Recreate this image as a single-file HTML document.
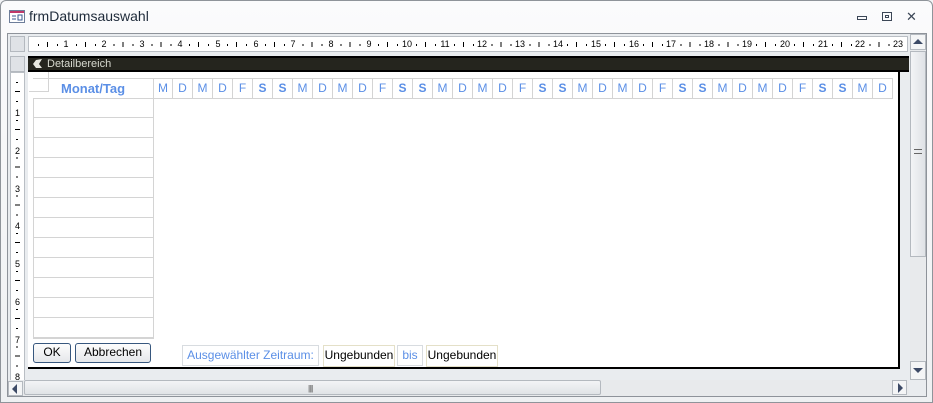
<!DOCTYPE html>
<html><head><meta charset="utf-8"><style>
*{margin:0;padding:0;box-sizing:border-box}
body{width:933px;height:403px;overflow:hidden;background:#f3f4f6;font-family:"Liberation Sans",sans-serif;position:relative}
.a{position:absolute}
.win{left:0;top:0;width:933px;height:403px;border:1px solid #8f949a;border-radius:6px 6px 0 0;background:linear-gradient(#fbfbfc,#eef0f2)}
.title{left:29px;top:8px;font-size:14px;color:#1e2a3a}
.frame{left:7px;top:33px;width:920px;height:364px;border:1px solid #8e939a;background:#e9ecef}
.hr{left:28px;top:36px;width:880px;height:16px;background:#fff;border:1px solid #b9bec4;font-size:9px;color:#000}
.hr span{position:absolute;top:1px;width:14px;margin-left:-7px;text-align:center;background:#fff;line-height:12px}
.vr{left:10px;top:56px;width:15px;height:325px;background:#fff;border:1px solid #b9bec4;font-size:9px}
.vr span{position:absolute;left:0;width:13px;text-align:center;margin-top:-6px;background:#fff;line-height:12px}
.box{background:#dfe2e6;border:1px solid #b4b9bf}
.sec{left:28px;top:56px;width:881px;height:16px;background:#25251e;border-top:2px solid #000;border-bottom:2px solid #000;color:#d8dad0;font-size:11px;padding-left:19px;line-height:12px}
.detail{left:28px;top:72px;width:872px;height:297px;background:#fff;border-right:2px solid #000;border-bottom:2px solid #000}
.cell{position:absolute;border:1px solid #d4d4d4;color:#5b8fe6;font-size:12px;text-align:center;line-height:18px}
.btn{position:absolute;border:1px solid #37577e;border-radius:3px;background:linear-gradient(#fdfdfd,#e5e7ea);font-size:12px;text-align:center;line-height:17px;color:#000}
.fld{position:absolute;font-size:12px;line-height:19px;text-align:center}
</style></head><body>
<div class="a win"></div>
<svg class="a" style="left:9px;top:10px" width="16" height="13"><rect x="0.5" y="0.5" width="15" height="12" fill="#fff" stroke="#6d7d99"/><rect x="1" y="1" width="14" height="2" fill="#c0386a"/><path d="M3 6h4M3 9h4" stroke="#3b5a92"/><rect x="9" y="5" width="4" height="5" fill="none" stroke="#3b5a92"/></svg>
<div class="a title">frmDatumsauswahl</div>
<div class="a" style="left:857px;top:16px;width:10px;height:4px;border:1px solid #3b4656"></div>
<div class="a" style="left:882px;top:12px;width:10px;height:9px;border:1px solid #3b4656"><div style="margin:2px;height:3px;border:1px solid #3b4656"></div></div>
<div class="a" style="left:906px;top:9px;font-size:13px;color:#3b4656">✕</div>
<div class="a frame"></div>
<div class="a box" style="left:10px;top:36px;width:15px;height:16px"></div>
<div class="a box" style="left:10px;top:56px;width:15px;height:16px;"></div>
<div class="a hr" style="background:#fff repeating-linear-gradient(90deg,transparent 0 9px,#000 9px 10px,transparent 10px 37.8px) 0 7px/100% 2px no-repeat">
<div class="a" style="left:0;top:5px;width:100%;height:5px;background:repeating-linear-gradient(90deg,transparent 0 18px,#000 18px 19px,transparent 19px 37.8px)"></div>
<div class="a" style="left:0;top:7px;width:100%;height:2px;background:repeating-linear-gradient(90deg,transparent 0 28px,#000 28px 29px,transparent 29px 37.8px)"></div>
<span style="left:37px">1</span><span style="left:75px">2</span><span style="left:113px">3</span><span style="left:151px">4</span><span style="left:189px">5</span><span style="left:227px">6</span><span style="left:264px">7</span><span style="left:302px">8</span><span style="left:340px">9</span><span style="left:378px">10</span><span style="left:416px">11</span><span style="left:453px">12</span><span style="left:491px">13</span><span style="left:529px">14</span><span style="left:567px">15</span><span style="left:605px">16</span><span style="left:642px">17</span><span style="left:680px">18</span><span style="left:718px">19</span><span style="left:756px">20</span><span style="left:794px">21</span><span style="left:831px">22</span><span style="left:869px">23</span>
</div>
<div class="a vr" style="top:72px;height:309px;background:#fff">
<div class="a" style="left:5px;top:0;width:2px;height:100%;background:repeating-linear-gradient(180deg,transparent 0 9px,#000 9px 10px,transparent 10px 18px,transparent 18px 37.8px)"></div>
<div class="a" style="left:4px;top:0;width:5px;height:100%;background:repeating-linear-gradient(180deg,transparent 0 18px,#000 18px 19px,transparent 19px 37.8px)"></div>
<div class="a" style="left:5px;top:0;width:2px;height:100%;background:repeating-linear-gradient(180deg,transparent 0 28px,#000 28px 29px,transparent 29px 37.8px)"></div>
<span style="top:40px">1</span><span style="top:78px">2</span><span style="top:116px">3</span><span style="top:153px">4</span><span style="top:191px">5</span><span style="top:229px">6</span><span style="top:267px">7</span><span style="top:304px">8</span>
</div>
<div class="a sec">Detailbereich</div>
<svg class="a" style="left:33px;top:59px" width="10" height="10"><path d="M9 0L3 1 0 5 3 9 9 9 6 5Z" fill="#e8e8e0"/></svg>
<div class="a detail"></div>
<div class="a" style="left:29px;top:72px;width:20px;height:20px;background:#fff;border:1px solid #d4d4d4;border-top:none;border-left:none"></div>
<div class="cell" style="left:33px;top:78px;width:121px;height:21px;font-weight:bold;font-size:13px;line-height:19px;color:#5b8fe6;border-left:none">Monat/Tag</div>
<div class="a" style="left:153px;top:78px;width:741px;height:21px;display:flex">
<div class="cell" style="position:static;width:20px;height:21px;margin-right:-1px;flex:none">M</div><div class="cell" style="position:static;width:21px;height:21px;margin-right:-1px;flex:none">D</div><div class="cell" style="position:static;width:21px;height:21px;margin-right:-1px;flex:none">M</div><div class="cell" style="position:static;width:21px;height:21px;margin-right:-1px;flex:none">D</div><div class="cell" style="position:static;width:21px;height:21px;margin-right:-1px;flex:none">F</div><div class="cell" style="position:static;width:21px;height:21px;margin-right:-1px;flex:none;font-weight:bold">S</div><div class="cell" style="position:static;width:21px;height:21px;margin-right:-1px;flex:none;font-weight:bold">S</div>
<div class="cell" style="position:static;width:21px;height:21px;margin-right:-1px;flex:none">M</div><div class="cell" style="position:static;width:21px;height:21px;margin-right:-1px;flex:none">D</div><div class="cell" style="position:static;width:21px;height:21px;margin-right:-1px;flex:none">M</div><div class="cell" style="position:static;width:21px;height:21px;margin-right:-1px;flex:none">D</div><div class="cell" style="position:static;width:21px;height:21px;margin-right:-1px;flex:none">F</div><div class="cell" style="position:static;width:21px;height:21px;margin-right:-1px;flex:none;font-weight:bold">S</div><div class="cell" style="position:static;width:21px;height:21px;margin-right:-1px;flex:none;font-weight:bold">S</div>
<div class="cell" style="position:static;width:21px;height:21px;margin-right:-1px;flex:none">M</div><div class="cell" style="position:static;width:21px;height:21px;margin-right:-1px;flex:none">D</div><div class="cell" style="position:static;width:21px;height:21px;margin-right:-1px;flex:none">M</div><div class="cell" style="position:static;width:21px;height:21px;margin-right:-1px;flex:none">D</div><div class="cell" style="position:static;width:21px;height:21px;margin-right:-1px;flex:none">F</div><div class="cell" style="position:static;width:21px;height:21px;margin-right:-1px;flex:none;font-weight:bold">S</div><div class="cell" style="position:static;width:21px;height:21px;margin-right:-1px;flex:none;font-weight:bold">S</div>
<div class="cell" style="position:static;width:21px;height:21px;margin-right:-1px;flex:none">M</div><div class="cell" style="position:static;width:21px;height:21px;margin-right:-1px;flex:none">D</div><div class="cell" style="position:static;width:21px;height:21px;margin-right:-1px;flex:none">M</div><div class="cell" style="position:static;width:21px;height:21px;margin-right:-1px;flex:none">D</div><div class="cell" style="position:static;width:21px;height:21px;margin-right:-1px;flex:none">F</div><div class="cell" style="position:static;width:21px;height:21px;margin-right:-1px;flex:none;font-weight:bold">S</div><div class="cell" style="position:static;width:21px;height:21px;margin-right:-1px;flex:none;font-weight:bold">S</div>
<div class="cell" style="position:static;width:21px;height:21px;margin-right:-1px;flex:none">M</div><div class="cell" style="position:static;width:21px;height:21px;margin-right:-1px;flex:none">D</div><div class="cell" style="position:static;width:21px;height:21px;margin-right:-1px;flex:none">M</div><div class="cell" style="position:static;width:21px;height:21px;margin-right:-1px;flex:none">D</div><div class="cell" style="position:static;width:21px;height:21px;margin-right:-1px;flex:none">F</div><div class="cell" style="position:static;width:21px;height:21px;margin-right:-1px;flex:none;font-weight:bold">S</div><div class="cell" style="position:static;width:21px;height:21px;margin-right:-1px;flex:none;font-weight:bold">S</div>
<div class="cell" style="position:static;width:21px;height:21px;margin-right:-1px;flex:none">M</div><div class="cell" style="position:static;width:21px;height:21px;margin-right:-1px;flex:none">D</div>
</div>
<div class="a" style="left:33px;top:98px;width:121px;height:241px;border:1px solid #d4d4d4;border-top:none;background:repeating-linear-gradient(180deg,transparent 0 19px,#d4d4d4 19px 20px)"></div>
<div class="btn" style="left:33px;top:343px;width:38px;height:20px">OK</div>
<div class="btn" style="left:75px;top:343px;width:76px;height:20px">Abbrechen</div>
<div class="fld" style="left:182px;top:345px;width:137px;height:21px;border:1px solid #d8dce0;color:#5b8fe6">Ausgewählter Zeitraum:</div>
<div class="fld" style="left:323px;top:345px;width:72px;height:22px;border:1px solid #e4e0c8;color:#000">Ungebunden</div>
<div class="fld" style="left:397px;top:345px;width:26px;height:21px;border:1px solid #d8dce0;color:#5b8fe6">bis</div>
<div class="fld" style="left:426px;top:345px;width:72px;height:22px;border:1px solid #e4e0c8;color:#000;overflow:hidden">Ungebunden</div>
<div class="a" style="left:910px;top:34px;width:16px;height:346px;background:#e8eaec"></div>
<div class="a box" style="left:910px;top:34px;width:16px;height:16px;background:#f4f5f6"></div>
<div class="a" style="left:913px;top:39px;width:0;height:0;border-left:5px solid transparent;border-right:5px solid transparent;border-bottom:5px solid #3c4a66"></div>
<div class="a box" style="left:910px;top:51px;width:16px;height:206px;background:linear-gradient(90deg,#f3f4f6,#dfe2e6)"></div>
<div class="a" style="left:914px;top:149px;width:8px;height:5px;border-top:1px solid #666;border-bottom:1px solid #666"></div>
<div class="a box" style="left:910px;top:361px;width:16px;height:19px;background:#f4f5f6"></div>
<div class="a" style="left:913px;top:368px;width:0;height:0;border-left:5px solid transparent;border-right:5px solid transparent;border-top:5px solid #3c4a66"></div>
<div class="a" style="left:8px;top:380px;width:901px;height:16px;background:#e8eaec"></div>
<div class="a box" style="left:8px;top:381px;width:15px;height:15px;background:#f4f5f6"></div>
<div class="a" style="left:12px;top:384px;width:0;height:0;border-top:5px solid transparent;border-bottom:5px solid transparent;border-right:5px solid #3c4a66"></div>
<div class="a box" style="left:24px;top:380px;width:577px;height:15px;background:linear-gradient(#f3f4f6,#e0e3e6);border-radius:2px"></div>
<div class="a" style="left:308px;top:384px;font-size:8px;color:#666;letter-spacing:-1px">||||</div>
<div class="a box" style="left:892px;top:380px;width:15px;height:15px;background:#f4f5f6"></div>
<div class="a" style="left:898px;top:383px;width:0;height:0;border-top:5px solid transparent;border-bottom:5px solid transparent;border-left:5px solid #3c4a66"></div>
</body></html>
